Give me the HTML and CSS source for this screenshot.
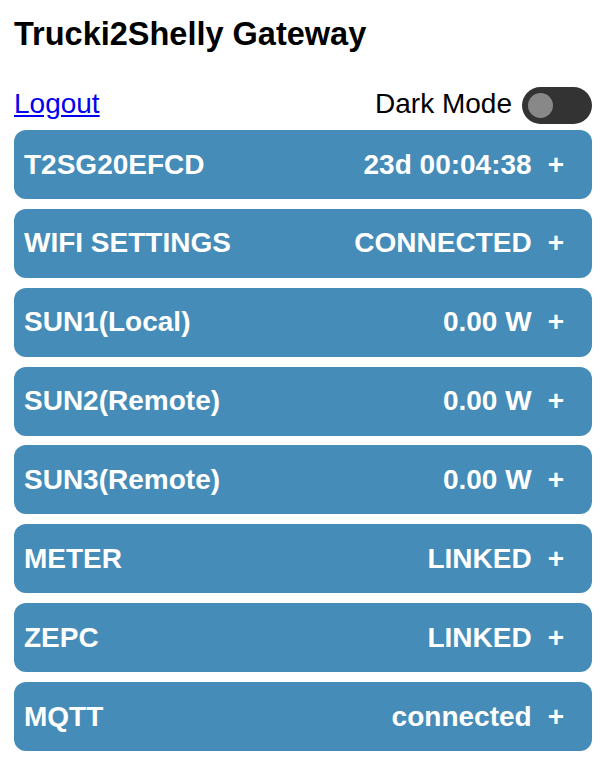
FILE: index.html
```html
<!DOCTYPE html>
<html lang="en">
<head>
<meta charset="utf-8">
<title>Trucki2Shelly Gateway</title>
<link rel="stylesheet" href="styles.css">
</head>
<body>
  <h1 class="title">Trucki2Shelly Gateway</h1>
  <div class="topbar">
    <a class="logout" href="#">Logout</a>
    <div class="mode">
      <span class="mode-label">Dark Mode</span>
      <span class="switch"><span class="knob"></span></span>
    </div>
  </div>
  <div class="list">
    <div class="card"><span class="name">T2SG20EFCD</span><span class="value">23d 00:04:38</span><span class="plus">+</span></div>
    <div class="card"><span class="name">WIFI SETTINGS</span><span class="value">CONNECTED</span><span class="plus">+</span></div>
    <div class="card"><span class="name">SUN1(Local)</span><span class="value">0.00 W</span><span class="plus">+</span></div>
    <div class="card"><span class="name">SUN2(Remote)</span><span class="value">0.00 W</span><span class="plus">+</span></div>
    <div class="card"><span class="name">SUN3(Remote)</span><span class="value">0.00 W</span><span class="plus">+</span></div>
    <div class="card"><span class="name">METER</span><span class="value">LINKED</span><span class="plus">+</span></div>
    <div class="card"><span class="name">ZEPC</span><span class="value">LINKED</span><span class="plus">+</span></div>
    <div class="card"><span class="name">MQTT</span><span class="value">connected</span><span class="plus">+</span></div>
  </div>
</body>
</html>
```
FILE: styles.css
```css
html, body {
  margin: 0;
  padding: 0;
  background: #ffffff;
}
body {
  font-family: "Liberation Sans", Arial, sans-serif;
  color: #000;
  padding: 16px 8px 0 14px;
}
.title {
  margin: 0;
  font-size: 32.5px;
  font-weight: bold;
  line-height: 37px;
}
.topbar {
  margin-top: 34px;
  height: 37px;
  display: flex;
  justify-content: space-between;
  align-items: flex-start;
  margin-bottom: 6px;
}
.logout {
  font-size: 28px;
  line-height: 32px;
  margin-top: 1px;
  color: #0000ee;
  text-decoration: underline;
}
.mode {
  display: flex;
  align-items: flex-start;
  gap: 10px;
}
.mode-label {
  font-size: 28px;
  line-height: 32px;
  margin-top: 1px;
}
.switch {
  position: relative;
  display: block;
  width: 70px;
  height: 37px;
  border-radius: 19px;
  background: #333333;
}
.knob {
  position: absolute;
  left: 6px;
  top: 6px;
  width: 25px;
  height: 25px;
  border-radius: 50%;
  background: #888888;
}
.list {
  display: flex;
  flex-direction: column;
  gap: 9.86px;
}
.card {
  height: 69px;
  display: flex;
  align-items: center;
  padding: 0 28px 0 10px;
  background: #458cb8;
  border-radius: 12px;
  color: #ffffff;
  font-size: 28px;
  font-weight: bold;
  line-height: 32px;
}
.name {
  flex: 1;
}
.value {
  margin-right: 16px;
}
```
